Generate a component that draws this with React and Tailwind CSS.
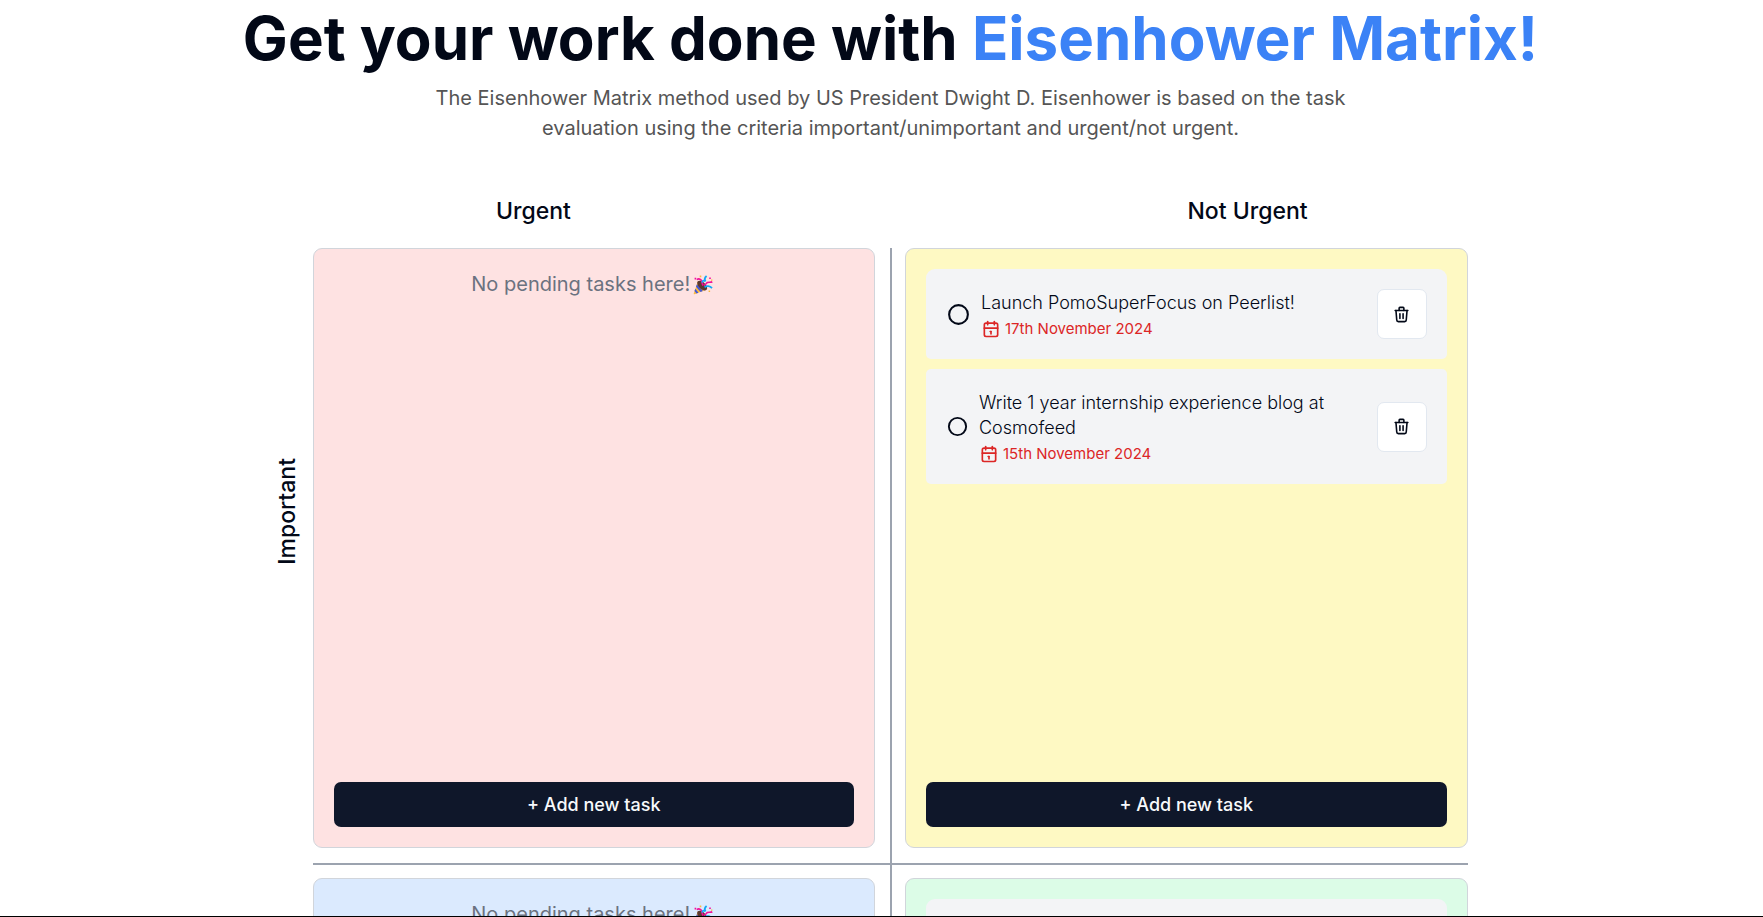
import { TbCalendar, TbTrash, TbCircle } from "react-icons/tb";

const quadrants = [
  { id: "do", color: "bg-[#fee2e2]", tasks: [] },
  {
    id: "schedule",
    color: "bg-[#fef9c3]",
    tasks: [
      { title: "Launch PomoSuperFocus on Peerlist!", date: "17th November 2024", icon: "size-[25px]" },
      { title: "Write 1 year internship experience blog at Cosmofeed", date: "15th November 2024", icon: "size-[23px]" },
    ],
  },
  { id: "delegate", color: "bg-[#dbeafe]", tasks: [] },
  { id: "delete", color: "bg-[#dcfce7]", tasks: [{ title: "", date: "", icon: "size-[25px]" }] },
];

function PartyPopper() {
  return (
    <svg viewBox="0 0 20 20" className="mr-[3px] ml-[3px] inline-block size-[20px] align-[-4px]" role="img" aria-label="Party popper">
      <path d="M5 6.2 L13.6 14.6 L1.6 19.2 Q.4 19.4.8 18.2Z" fill="#fbb93c" />
      <path d="M3.9 9.2 L9.9 16 L7.6 16.9 L3 11.8Z M2.3 13.8 L5.4 17.7 L3.5 18.5 L1.5 16.1Z" fill="#4257d8" />
      <ellipse cx="9.2" cy="10.6" rx="6.1" ry="3.4" transform="rotate(44 9.2 10.6)" fill="#5b3a31" />
      <path d="M3.8 4.6c2.2-1.4 4.7-.3 5.2 2.2.3 1.6.2 2.6 1.2 3.6" fill="none" stroke="#f0109a" strokeWidth="1.7" />
      <path d="M9.2 7.6c.2-2.8 2.4-2.2 3.3-1.2 M12.6 6.4c-1.4-2-.5-4.2 1-5.4" fill="none" stroke="#12a8f4" strokeWidth="1.8" />
      <path d="M10.8 10.3c1.6-.2 2.4-2 3.6-2.7 1.6-.8 3.2.2 4.9-.9" fill="none" stroke="#f0109a" strokeWidth="1.7" />
      <path d="M11.6 12.3c2-1.9 5.4-1.4 7.4.9" fill="none" stroke="#12a8f4" strokeWidth="1.8" />
      <path d="M16.2 2.4h1.6v1.6h-1.6z M1.6 2.8h1.6v1.6H1.6z" fill="#f0109a" />
      <path d="M6.7.6h1.6v1.6H6.7z M18 4.4h1.4v1.4H18z M15.6 15.4h1.5v1.5h-1.5z" fill="#fbb93c" />
    </svg>
  );
}

function Task({ task }) {
  return (
    <li className="flex min-h-[90px] items-center justify-between rounded-[5px] bg-[#f3f4f6] px-[20px] py-[18px] first:rounded-t-[9px]">
      {task.title && (
        <>
          <div className="flex items-center gap-[10px]">
            <button type="button" aria-label={`Complete ${task.title}`} className="shrink-0">
              <TbCircle className={task.icon} />
            </button>
            <div className="max-w-[360px] pt-[3px]">
              <p className="text-[18px] leading-[25px] font-light">{task.title}</p>
              <p className="mt-px flex items-center gap-[4px] text-[15px] leading-[25px] text-[#dc2626]">
                <TbCalendar className="size-[20px]" />
                {task.date}
              </p>
            </div>
          </div>
          <button
            type="button"
            aria-label={`Delete ${task.title}`}
            className="flex size-[50px] shrink-0 items-center justify-center rounded-[7px] border border-[#e2e8f0] bg-white"
          >
            <TbTrash className="size-[19px]" />
          </button>
        </>
      )}
    </li>
  );
}

function Quadrant({ color, tasks }) {
  return (
    <section className={`flex h-[600px] flex-col justify-between rounded-[9px] border border-[#d1d5db] p-[20px] ${color}`}>
      {tasks.length === 0 ? (
        <p className="text-center text-[20px] leading-[30px] text-[#6b7280]">
          No pending tasks here!
          <PartyPopper />
        </p>
      ) : (
        <ul className="flex flex-col gap-[10px]">
          {tasks.map((task) => (
            <Task key={task.title} task={task} />
          ))}
        </ul>
      )}
      <button type="button" className="h-[45px] w-full rounded-[7px] bg-[#0f172a] text-[18px] font-medium text-[#f8fafc]">
        + Add new task
      </button>
    </section>
  );
}

export default function App() {
  return (
    <main className="h-screen overflow-hidden border-b border-black bg-white pt-[8px] pl-[18px] font-['Inter',sans-serif] text-[#020817]">
      <header className="text-center">
        <h1 className="text-[60px] leading-[60px] font-bold">
          Get your work done with <span className="text-[#3b82f6]">Eisenhower Matrix!</span>
        </h1>
        <p className="mx-auto mt-[15px] max-w-[960px] text-[20px] leading-[30px] text-[#555555]">
          The Eisenhower Matrix method used by US President Dwight D. Eisenhower is based on the task evaluation using the
          criteria important/unimportant and urgent/not urgent.
        </p>
      </header>
      <div className="mx-auto mt-[54px] grid max-w-[1428px] grid-cols-2 text-center text-[23px] leading-[28px] font-medium">
        <h2>Urgent</h2>
        <h2>Not Urgent</h2>
      </div>
      <div className="mt-[23px] flex justify-center gap-[12px] pr-[41px]">
        <div className="flex h-[526px] items-center">
          <h2 className="rotate-180 text-[23px] leading-[28px] font-medium [writing-mode:vertical-rl]">Important</h2>
        </div>
        <div className="relative grid w-full max-w-[1155px] grid-cols-2 gap-[30px]">
          {quadrants.map((q) => (
            <Quadrant key={q.id} color={q.color} tasks={q.tasks} />
          ))}
          <div className="absolute inset-y-0 left-1/2 w-[2px] bg-[#9ca3af]" />
          <div className="absolute inset-x-0 top-1/2 h-[2px] bg-[#9ca3af]" />
        </div>
      </div>
    </main>
  );
}
